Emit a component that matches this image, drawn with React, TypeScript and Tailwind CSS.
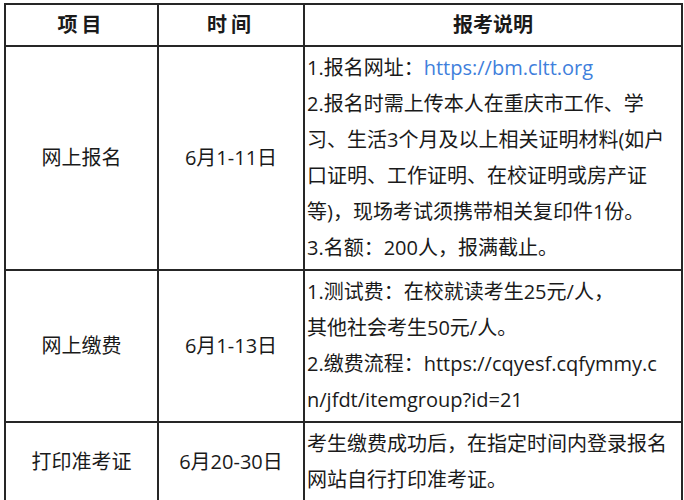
const font = { fontFamily: '"Open Sans", "Noto Sans CJK SC", sans-serif' };

const rows = [
  {
    item: "网上报名",
    time: "6月1-11日",
    lines: [
      <>
        1.报名网址：<span className="text-[#3f80dc]">https://bm.cltt.org</span>
      </>,
      "2.报名时需上传本人在重庆市工作、学",
      "习、生活3个月及以上相关证明材料(如户",
      "口证明、工作证明、在校证明或房产证",
      "等)，现场考试须携带相关复印件1份。",
      "3.名额：200人，报满截止。",
    ],
  },
  {
    item: "网上缴费",
    time: "6月1-13日",
    lines: [
      "1.测试费：在校就读考生25元/人，",
      "其他社会考生50元/人。",
      "2.缴费流程：https://cqyesf.cqfymmy.c",
      "n/jfdt/itemgroup?id=21",
    ],
  },
  {
    item: "打印准考证",
    time: "6月20-30日",
    lines: ["考生缴费成功后，在指定时间内登录报名", "网站自行打印准考证。"],
  },
];

export default function App() {
  return (
    <div className="w-[684px] h-[500px] bg-white pl-[4px] pt-[3px] text-[#1a1a1a]" style={font}>
      <table className="border-collapse w-[677px] table-fixed text-[20px]">
        <colgroup>
          <col className="w-[153px]" />
          <col className="w-[146px]" />
          <col className="w-[378px]" />
        </colgroup>
        <thead>
          <tr className="h-[42px]">
            <th className="border-2 border-[#262626] font-bold text-center tracking-[4px]">项目</th>
            <th className="border-2 border-[#262626] font-bold text-center tracking-[4px]">时间</th>
            <th className="border-2 border-[#262626] font-bold text-center">报考说明</th>
          </tr>
        </thead>
        <tbody>
          {rows.map((r) => (
            <tr key={r.item}>
              <td className="border-2 border-[#262626] text-center align-middle">{r.item}</td>
              <td className="border-2 border-[#262626] text-center align-middle">{r.time}</td>
              <td className="border-2 border-[#262626] align-top pl-[2px] py-[3px] leading-[36px] whitespace-nowrap overflow-hidden">
                {r.lines.map((l, i) => (
                  <div key={i}>{l}</div>
                ))}
              </td>
            </tr>
          ))}
        </tbody>
      </table>
    </div>
  );
}
